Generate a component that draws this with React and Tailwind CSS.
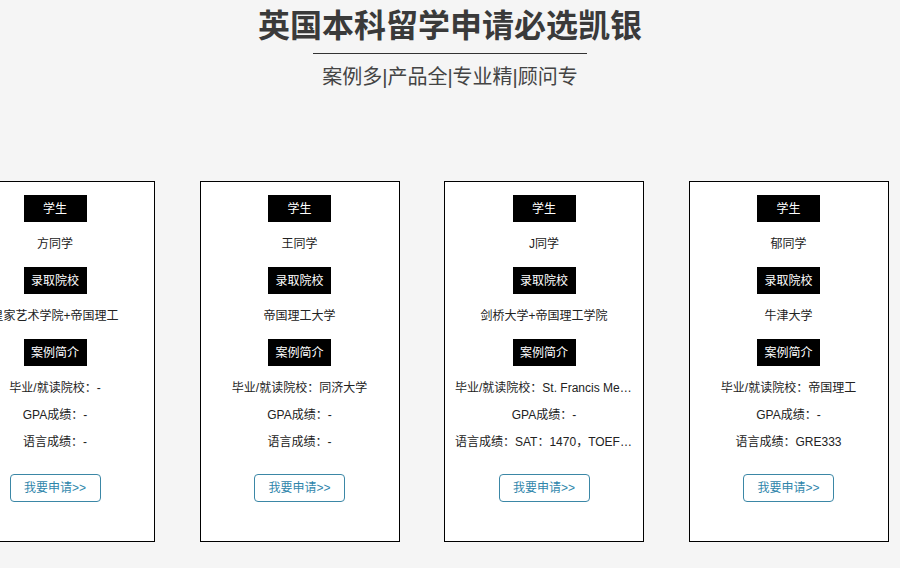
const cases = [
  {
    name: "方同学",
    school: "皇家艺术学院+帝国理工",
    from: "毕业/就读院校：-",
    gpa: "GPA成绩：-",
    lang: "语言成绩：-"
  },
  {
    name: "王同学",
    school: "帝国理工大学",
    from: "毕业/就读院校：同济大学",
    gpa: "GPA成绩：-",
    lang: "语言成绩：-"
  },
  {
    name: "J同学",
    school: "剑桥大学+帝国理工学院",
    from: "毕业/就读院校：St. Francis Methodist School",
    gpa: "GPA成绩：-",
    lang: "语言成绩：SAT：1470，TOEFL：110"
  },
  {
    name: "郁同学",
    school: "牛津大学",
    from: "毕业/就读院校：帝国理工",
    gpa: "GPA成绩：-",
    lang: "语言成绩：GRE333"
  }
];

function Label({ children }) {
  return (
    <div className="mx-auto w-[63px] h-[27px] bg-black text-white text-[12px] flex items-center justify-center">
      {children}
    </div>
  );
}

function CaseCard({ item }) {
  return (
    <div className="shrink-0 w-[200px] h-[361px] border border-black bg-white pt-[13px] text-center text-[12px] text-[#222]">
      <Label>学生</Label>
      <p className="mt-[12px] mb-[13px] leading-[20px]">{item.name}</p>

      <Label>录取院校</Label>
      <p className="mt-[12px] mb-[13px] leading-[20px] whitespace-nowrap">{item.school}</p>

      <Label>案例简介</Label>
      <div className="mt-[9px] px-[10px]">
        <p className="leading-[27px] truncate">{item.from}</p>
        <p className="leading-[27px] truncate">{item.gpa}</p>
        <p className="leading-[27px] truncate">{item.lang}</p>
      </div>

      <button className="mt-[18px] w-[91px] h-[28px] rounded-[4px] border border-[#3b87a6] text-[#2f86ab] text-[12px] bg-white">
        我要申请&gt;&gt;
      </button>
    </div>
  );
}

export default function App() {
  return (
    <div
      className="w-[900px] h-[568px] overflow-hidden bg-[#f5f5f5]"
      style={{ fontFamily: '"Liberation Sans", "Noto Sans CJK SC", sans-serif' }}
    >
      <div className="pt-[6px] flex flex-col items-center">
        <h1 className="text-[32px] leading-[40px] font-bold text-[#3a3a3a]">
          英国本科留学申请必选凯银
        </h1>
        <div className="mt-[7px] w-[274px] h-px bg-[#333]" />
        <p className="mt-[9px] text-[20px] leading-[28px] text-[#444]">
          案例多|产品全|专业精|顾问专
        </p>
      </div>

      <div className="mt-[90px] ml-[-45px] flex gap-[44.5px]">
        {cases.map(c => (
          <CaseCard key={c.name} item={c} />
        ))}
      </div>
    </div>
  );
}
